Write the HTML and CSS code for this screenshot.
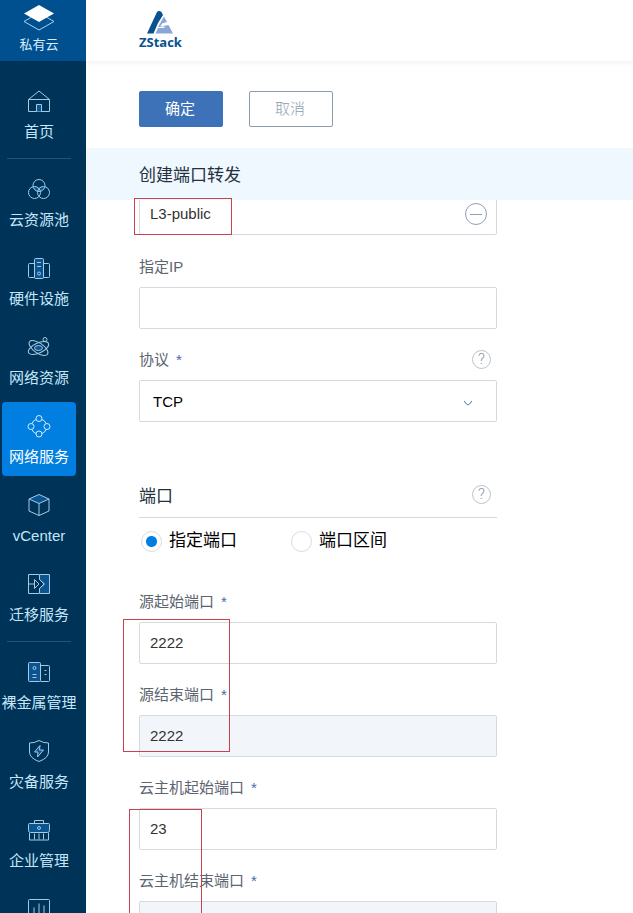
FILE: index.html
```
<!DOCTYPE html>
<html lang="zh-CN">
<head>
    <meta charset="UTF-8" />
    <meta name="viewport" content="width=device-width, initial-scale=1" />
    <title>ZStack - 创建端口转发</title>
    <link rel="stylesheet" href="styles.css">
</head>
<body>

<div class="app">
    <aside class="sidebar">
        <a href="#" class="cloud">
            <svg width="34" height="28" viewBox="0 0 34 28" fill="none" stroke="#a5d3f5">
                <path d="M9 13.500 2 17.500 17 26 32 17.500 25 13.500" />
                <path d="M17 1 32 9.500 17 18 2 9.500Z" fill="#fff" stroke="none" />
            </svg>
            <span>私有云</span>
        </a>
        <nav class="nav">
            <a href="#" class="nav-item">
                <svg class="icon" viewBox="0 0 24 24">
                    <path d="M1.500 10.500 12 2l10.500 8.500M1.500 10.500h21V22.500h-21z" />
                    <path class="tint" d="M9.500 22.500v-7h5v7" />
                </svg>
                <span>首页</span>
            </a>
            <hr>
            <a href="#" class="nav-item">
                <svg class="icon" viewBox="0 0 24 24">
                    <path class="tint" d="M6 10.500c1-1 4-1.500 6 .5 2-2 5-1.500 6-.5-.5 2-2.500 4-6 4s-5.500-2-6-4z" stroke="none" />
                    <circle cx="12" cy="8.500" r="6" />
                    <circle cx="7.500" cy="15.500" r="6" />
                    <circle cx="16.500" cy="15.500" r="6" />
                </svg>
                <span>云资源池</span>
            </a>
            <a href="#" class="nav-item">
                <svg class="icon" viewBox="0 0 24 24">
                    <path d="M7.500 7.500h-5q-1 0-1 1v12q0 1 1 1h5M16.500 7.500h5q1 0 1 1v12q0 1-1 1h-5" />
                    <rect class="tint" x="7.500" y="2.500" width="9" height="20" rx="1" />
                    <path d="M10 6.500h4M10 10.500h4" />
                    <circle cx="12" cy="17.500" r="1.500" />
                </svg>
                <span>硬件设施</span>
            </a>
            <a href="#" class="nav-item">
                <svg class="icon" viewBox="0 0 24 24">
                    <ellipse cx="11.500" cy="13" rx="11" ry="5" transform="rotate(35 11.500 13)" />
                    <ellipse cx="11.500" cy="13" rx="11" ry="5" transform="rotate(-25 11.500 13)" />
                    <ellipse class="tint" cx="11.500" cy="13" rx="4" ry="2.500" />
                    <circle cx="18" cy="4.500" r="2" />
                </svg>
                <span>网络资源</span>
            </a>
            <a href="#" class="nav-item active">
                <svg class="icon" viewBox="0 0 24 24">
                    <circle cx="12" cy="4.500" r="3" />
                    <circle cx="4" cy="12.500" r="3" />
                    <circle cx="20" cy="12.500" r="3" />
                    <circle cx="12" cy="20" r="3" />
                    <path d="M9 5.500Q6 6.500 5 9.500M15 5.500q3 1 4 4M5 15.500q1 3 4 4M19 15.500q-1 3-4 4" />
                </svg>
                <span>网络服务</span>
            </a>
            <a href="#" class="nav-item">
                <svg class="icon" viewBox="0 0 24 24">
                    <path class="tint" d="M12 1.500 22 6 12 10.500 2 6z" />
                    <path d="M2 6v12l10 4.500L22 18V6M12 10.500v12" />
                </svg>
                <span>vCenter</span>
            </a>
            <a href="#" class="nav-item">
                <svg class="icon" viewBox="0 0 24 24">
                    <path class="tint" d="M12.500 2.500h10v19h-10v-5l5-4.500-5-4.500z" />
                    <path d="M12 2.500H1.500v19H12M1.500 12h6M7.500 7.500 12 12l-4.500 4.500zM12.500 7.500 17 12l-4.500 4.500" />
                </svg>
                <span>迁移服务</span>
            </a>
            <hr>
            <a href="#" class="nav-item">
                <svg class="icon" viewBox="0 0 24 24">
                    <path d="M13.500 5.500h8q1 0 1 1v14q0 1-1 1h-8M17.500 10.500h2M17.500 14.500h2" />
                    <rect class="tint" x="1.500" y="2.500" width="12" height="19" rx="1" />
                    <circle cx="7.500" cy="8" r="1.500" />
                    <path d="M5.500 14.500h4M5.500 17.500h4" />
                </svg>
                <span>裸金属管理</span>
            </a>
            <a href="#" class="nav-item">
                <svg class="icon" viewBox="0 0 24 24">
                    <path d="M12 1.500Q16 4 21.500 4v9q0 6-9.500 9.500Q2.500 19 2.500 13V4Q8 4 12 1.500z" />
                    <path class="tint" d="M13 6.500 7.500 13H11l-.5 5L16.500 11H12.500z" />
                </svg>
                <span>灾备服务</span>
            </a>
            <a href="#" class="nav-item">
                <svg class="icon" viewBox="0 0 24 24">
                    <path d="M7.500 5.500v-3h9v3M2.500 15v7h19v-7M7.500 15.500v6M12 15.500v6M16.500 15.500v6" />
                    <path class="tint" d="M2.500 5.500h19q1 0 1 1v6q0 2-2 2h-17q-2 0-2-2v-6q0-1 1-1z" />
                    <circle cx="12" cy="10" r="1.500" />
                </svg>
                <span>企业管理</span>
            </a>
            <a href="#" class="nav-item" aria-label="更多">
                <svg class="icon" viewBox="0 0 24 24">
                    <rect x="1.500" y="2.500" width="21" height="19" rx="1" />
                    <path d="M7 10.500v7M12 6.500v11M17 8.500v9" />
                </svg>
            </a>
        </nav>
    </aside>

    <main class="main">
        <header class="topbar">
            <a href="#" class="logo">
                <svg width="28" height="24" viewBox="0 0 28 24">
                    <path d="M11 2q2-2 4.500 0L17 5 12 13 7.500 23.500H1z" fill="#08528f" />
                    <path d="M18 6.500 21 12l-5 1.500-1.500 3 8-1.500L27 23.500H9.500L12 18h6l1-1.500-7 .5z" fill="#8aa6d6" />
                </svg>
                <span>ZStack</span>
            </a>
        </header>

        <div class="actions">
            <button type="submit" form="portForm" class="btn primary">确定</button>
            <button type="button" class="btn">取消</button>
        </div>

        <h1 class="title">创建端口转发</h1>

        <div class="form-view">
            <form id="portForm" class="form">
                <div class="network">
                    <input type="text" value="L3-public" aria-label="网络" readonly>
                    <button type="button" class="remove" aria-label="移除">
                        <svg width="24" height="24" viewBox="0 0 24 24" fill="none" stroke="#8d9dbf">
                            <circle cx="12" cy="12" r="10.500" />
                            <path d="M6 12.500h12" />
                        </svg>
                    </button>
                </div>

                <div class="field">
                    <label for="ip">指定IP</label>
                    <input type="text" id="ip">
                </div>

                <div class="field">
                    <div class="label-row">
                        <label for="protocol">协议<i>*</i></label>
                        <button type="button" class="help" aria-label="协议帮助">?</button>
                    </div>
                    <div class="select">
                        <select id="protocol">
                            <option>TCP</option>
                            <option>UDP</option>
                        </select>
                        <svg class="arrow" width="10" height="6" viewBox="0 0 10 6" fill="none" stroke="#4a6fae">
                            <path d="M1 1q3 4 4 4t4-4" />
                        </svg>
                    </div>
                </div>

                <div class="section">
                    <h2>端口</h2>
                    <button type="button" class="help" aria-label="端口帮助">?</button>
                </div>
                <div class="radios">
                    <label><input type="radio" name="mode" checked>指定端口</label>
                    <label><input type="radio" name="mode">端口区间</label>
                </div>

                <div class="field">
                    <label for="srcStart">源起始端口<i>*</i></label>
                    <input type="text" id="srcStart" value="2222">
                </div>
                <div class="field">
                    <label for="srcEnd">源结束端口<i>*</i></label>
                    <input type="text" id="srcEnd" value="2222" disabled>
                </div>
                <div class="field">
                    <label for="vmStart">云主机起始端口<i>*</i></label>
                    <input type="text" id="vmStart" value="23">
                </div>
                <div class="field">
                    <label for="vmEnd">云主机结束端口<i>*</i></label>
                    <input type="text" id="vmEnd" disabled>
                </div>
            </form>
        </div>

        <!-- red highlight boxes over the form -->
        <div class="mark mark-network"></div>
        <div class="mark mark-source"></div>
        <div class="mark mark-vm"></div>
    </main>
</div>

</body>
</html>
```
FILE: styles.css
```
* {
    box-sizing: border-box;
}
body {
    margin: 0;
    font-family: "Liberation Sans", "Noto Sans CJK SC", sans-serif;
    font-size: 15px;
    color: #333;
    background: #fff;
}
button, input, select {
    font: inherit;
    color: inherit;
}
a {
    text-decoration: none;
}
.app {
    display: flex;
    height: 100vh;
    overflow: hidden;
}

/* sidebar */
.sidebar {
    flex: 0 0 86px;
    overflow: hidden;
    background: #003358;
}
.cloud {
    display: flex;
    flex-direction: column;
    align-items: center;
    gap: 4px;
    height: 61px;
    padding: 4px 8px 0 0;
    background: #00508f;
    color: #d5ecfc;
    font-size: 13px;
    line-height: 18px;
}
.nav {
    display: flex;
    flex-direction: column;
    padding: 16px 10px 0 2px;
}
.nav hr {
    flex: none;
    width: 64px;
    height: 1px;
    margin: 7px auto 6px;
    border: none;
    background: #24527a;
}
.nav-item {
    display: flex;
    flex: none;
    flex-direction: column;
    align-items: center;
    gap: 9px;
    height: 74px;
    padding-top: 12px;
    border-radius: 4px;
    color: #c5e6fa;
    line-height: 20px;
    white-space: nowrap;
}
.nav-item + .nav-item {
    margin-top: 5px;
}
.nav-item.active {
    background: #007fe0;
    color: #fff;
}
.icon {
    flex: none;
    width: 24px;
    height: 24px;
    fill: none;
    stroke: #a3cbe6;
}
.icon .tint {
    fill: #0c5490;
}
.active .icon {
    stroke: #d0ecff;
}

/* main column */
.main {
    position: relative;
    display: flex;
    flex: 1;
    flex-direction: column;
    min-width: 0;
}
.topbar {
    flex: none;
    height: 61px;
    padding: 10px 53px 0;
    box-shadow: 0 2px 5px rgba(0, 0, 0, 0.06);
}
.logo {
    display: inline-flex;
    flex-direction: column;
    align-items: center;
    color: #08528f;
    font-family: "Open Sans", sans-serif;
    font-size: 13px;
    font-weight: 700;
    line-height: 16px;
}
.actions {
    display: flex;
    flex: none;
    gap: 26px;
    padding: 30px 53px 21px;
}
.btn {
    width: 84px;
    height: 36px;
    padding: 0 2px 4px 0;
    border: 1px solid #8c9cb0;
    border-radius: 2px;
    background: #fff;
    color: #8c9cb0;
    font-weight: 300;
    cursor: pointer;
}
.btn.primary {
    border-color: #3d72b8;
    background: #3d72b8;
    color: #fff;
    font-weight: 400;
}
.title {
    flex: none;
    margin: 0;
    padding: 4px 53px 0;
    background: #eff7ff;
    color: #24303c;
    font-size: 17px;
    font-weight: 400;
    line-height: 48px;
}

/* form */
.form-view {
    flex: 1;
    min-height: 0;
    padding: 0 53px;
    overflow: hidden;
}
.form {
    max-width: 358px;
    margin-top: -7px;
}
.form input[type=text], .form select {
    display: block;
    width: 100%;
    height: 42px;
    padding: 0 10px 2px;
    border: 1px solid #d7dadd;
    border-radius: 2px;
    background: #fff;
    outline: none;
}
.form input[type=text]:disabled {
    background: #f2f6fa;
}
.network, .select {
    position: relative;
}
.network {
    margin-bottom: 22px;
}
.remove {
    position: absolute;
    top: 9px;
    right: 9px;
    display: flex;
    padding: 0;
    border: none;
    background: none;
}
.form select {
    padding: 0 13px;
    color: #000;
    appearance: none;
}
.arrow {
    position: absolute;
    top: 20px;
    right: 24px;
    pointer-events: none;
}
.field + .field, .radios + .field {
    margin-top: 21px;
}
.field label {
    display: block;
    margin-bottom: 10px;
    color: #5c6470;
    line-height: 20px;
}
.field i {
    margin-left: 7px;
    color: #4a69b0;
    font-style: normal;
}
.label-row, .section {
    display: flex;
    justify-content: space-between;
}
.help {
    width: 19px;
    height: 19px;
    margin-right: 6px;
    padding: 0;
    border: 1px solid #bcc3cf;
    border-radius: 50%;
    background: none;
    color: #8c96a8;
    font-family: Roboto, sans-serif;
    font-weight: 300;
    line-height: 17px;
}
.section {
    margin-top: 63px;
    padding-bottom: 8px;
    border-bottom: 1px solid #d7dadd;
}
.section h2 {
    margin: 0;
    color: #24303c;
    font-size: 17px;
    font-weight: 400;
    line-height: 24px;
}
.radios {
    display: flex;
    gap: 54px;
    padding: 11px 0 18px 2px;
    color: #000;
    font-size: 17px;
    line-height: 24px;
}
.radios label {
    display: flex;
    align-items: center;
    gap: 7px;
}
.radios input {
    width: 21px;
    height: 21px;
    margin: 0;
    border: 1px solid #d5dbe3;
    border-radius: 50%;
    appearance: none;
}
.radios input:checked {
    background: radial-gradient(circle, #007fe0 5px, transparent 6px);
}

/* highlights */
.mark {
    position: absolute;
    border: 1px solid #c9414f;
    pointer-events: none;
}
.mark-network {
    top: 198px;
    left: 48px;
    width: 98px;
    height: 37px;
}
.mark-source {
    top: 619px;
    left: 37px;
    width: 107px;
    height: 133px;
}
.mark-vm {
    top: 809px;
    bottom: 0;
    left: 43px;
    width: 73px;
    border-bottom: none;
}
```
